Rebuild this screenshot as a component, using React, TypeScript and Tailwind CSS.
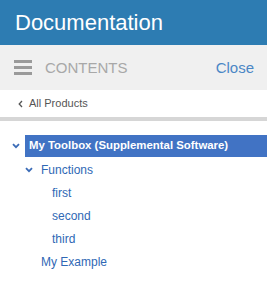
import React from "react";

const Chevron = ({ className }: { className?: string }) => (
  <svg width="8" height="6" viewBox="0 0 8 6" className={className}>
    <path d="M1 1.2 L4 4.2 L7 1.2" fill="none" stroke="currentColor" strokeWidth="1.8" />
  </svg>
);

export default function App() {
  return (
    <div className="w-[267px] h-[301px] bg-white overflow-hidden" style={{ fontFamily: '"Liberation Sans", Arial, sans-serif' }}>
      <div className="h-[45px] bg-[#2d7cb2] flex items-center pl-[15px]">
        <span className="text-white text-[22px] leading-none mt-[1px]">Documentation</span>
      </div>
      <div className="h-[45px] bg-[#f0f0f0] flex items-center pl-[14px] pr-[13px]">
        <div className="flex flex-col gap-[3px] w-[18px]">
          <div className="h-[3px] bg-[#9a9a9a]" />
          <div className="h-[3px] bg-[#9a9a9a]" />
          <div className="h-[3px] bg-[#9a9a9a]" />
        </div>
        <span className="ml-[13px] text-[15px] text-[#a8a8a8] leading-none">CONTENTS</span>
        <span className="ml-auto text-[15px] text-[#4b87c6] leading-none">Close</span>
      </div>
      <div className="h-[27px] flex items-center pl-[18px] border-b-[4px] border-[#d6d6d6] box-content">
        <svg width="5" height="8" viewBox="0 0 5 8" className="text-[#555]">
          <path d="M4 1 L1.2 4 L4 7" fill="none" stroke="currentColor" strokeWidth="1.3" />
        </svg>
        <span className="ml-[6px] text-[11px] text-[#555] leading-none">All Products</span>
      </div>
      <div className="pt-[14px]">
        <div className="flex items-center h-[22px] mb-[1px]">
          <div className="w-[25px] flex justify-center pl-[7px]">
            <Chevron className="text-[#3b6cb7]" />
          </div>
          <div className="flex-1 h-full bg-[#4173c4] flex items-center pl-[4px]">
            <span className="text-white font-bold text-[11.4px] leading-none">My Toolbox (Supplemental Software)</span>
          </div>
        </div>
        <div className="flex items-center h-[23px] pl-[25px]">
          <Chevron className="text-[#3b6cb7]" />
          <span className="ml-[8px] text-[12px] text-[#2f68b5] leading-none">Functions</span>
        </div>
        <div className="flex items-center h-[23px] pl-[52px]">
          <span className="text-[12px] text-[#2f68b5] leading-none">first</span>
        </div>
        <div className="flex items-center h-[23px] pl-[52px]">
          <span className="text-[12px] text-[#2f68b5] leading-none">second</span>
        </div>
        <div className="flex items-center h-[23px] pl-[52px]">
          <span className="text-[12px] text-[#2f68b5] leading-none">third</span>
        </div>
        <div className="flex items-center h-[23px] pl-[41px]">
          <span className="text-[12px] text-[#2f68b5] leading-none">My Example</span>
        </div>
      </div>
    </div>
  );
}
